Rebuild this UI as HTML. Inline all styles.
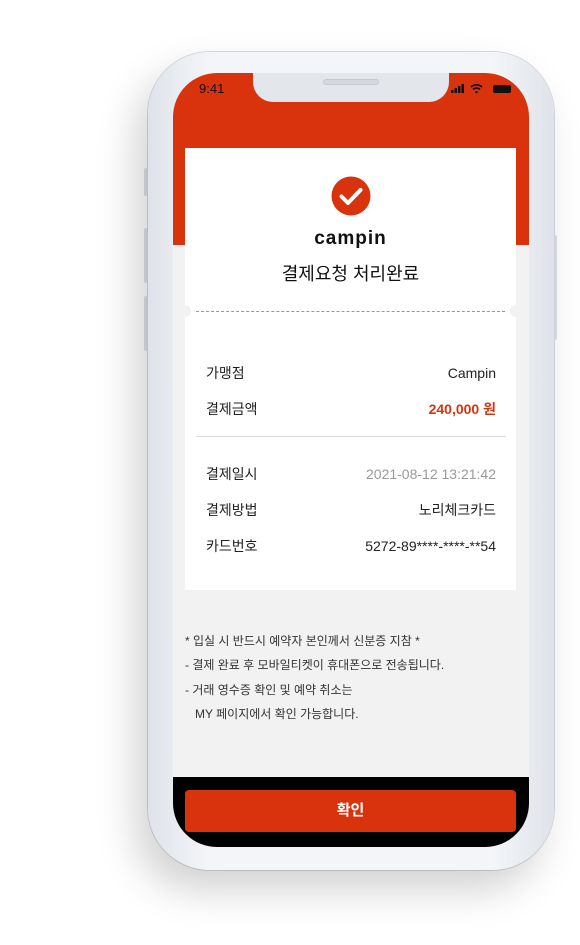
<!DOCTYPE html>
<html><head><meta charset="utf-8"><style>
*{margin:0;padding:0;box-sizing:border-box}
body{width:580px;height:945px;background:#fff;position:relative;overflow:hidden;font-family:"Liberation Sans","Noto Sans CJK KR",sans-serif}
.phone{position:absolute;left:148px;top:52px;width:406px;height:818px;border-radius:62px;background:linear-gradient(90deg,#dfe3e9,#f3f5f8 15%,#f3f5f8 85%,#dfe3e9);box-shadow:-12px 20px 40px rgba(0,0,0,.18),0 0 0 1px #d8dce2}
.btn{position:absolute;background:#dde1e7;border-radius:2px}
.screen{position:absolute;left:173px;top:73px;width:356px;height:774px;border-radius:44px;overflow:hidden;background:#f2f2f2}
.red{position:absolute;left:0;top:0;width:356px;height:172px;background:#d9330d}
.notch{position:absolute;left:80px;top:-2px;width:196px;height:31px;background:#e3e6eb;border-radius:0 0 20px 20px}
.spk{position:absolute;left:150px;top:6px;width:56px;height:6px;border-radius:3px;background:#d4d8de;border:1px solid #c6cad0}
.card{position:absolute;left:12px;top:75px;width:331px;height:442px;background:#fff}
.hole{position:absolute;width:12px;height:12px;border-radius:50%;background:#f2f2f2;top:232px}
.row{position:absolute;left:21px;right:20px;font-size:14px;color:#222;display:flex;justify-content:space-between;align-items:baseline}
.note{position:absolute;left:12px;font-size:12px;color:#333}
</style></head><body>
<div class="btn" style="left:144px;top:168px;width:4px;height:28px"></div>
<div class="btn" style="left:144px;top:228px;width:4px;height:55px"></div>
<div class="btn" style="left:144px;top:296px;width:4px;height:55px"></div>
<div class="btn" style="left:553px;top:235px;width:4px;height:105px"></div>
<div class="phone"></div>
<div class="screen">
<div class="red"></div>
<div class="notch"></div><div class="spk"></div>
<div style="position:absolute;left:26px;top:8px;font-size:13px;color:#111">9:41</div>
<svg style="position:absolute;left:276px;top:9px" width="70" height="12" viewBox="0 0 70 12"><rect x="2" y="8" width="2.5" height="3" fill="#111"/><rect x="5.5" y="6" width="2.5" height="5" fill="#111"/><rect x="9" y="4" width="2.5" height="7" fill="#111"/><rect x="12.5" y="2" width="2.5" height="9" fill="#111"/><path d="M22 5a8 8 0 0 1 11 0M24 7.5a5 5 0 0 1 7 0" stroke="#111" stroke-width="1.6" fill="none"/><circle cx="27.5" cy="10" r="1.3" fill="#111"/><rect x="44" y="3" width="18" height="8" rx="2" fill="#111"/></svg>
<div class="card">
<svg style="position:absolute;left:146px;top:28px" width="40" height="40" viewBox="0 0 40 40"><circle cx="20" cy="20" r="19.5" fill="#d9330d"/><path d="M10.5 20.5l6.5 6.5 12.5-13" stroke="#fff" stroke-width="4" fill="none" stroke-linecap="round" stroke-linejoin="round"/></svg>
<div style="position:absolute;left:0;right:0;top:80px;text-align:center;font-size:19px;font-weight:bold;letter-spacing:1px;color:#111">campin</div>
<div style="position:absolute;left:0;right:0;top:112px;text-align:center;font-size:18px;color:#111">결제요청 처리완료</div>
<div style="position:absolute;left:11px;right:11px;top:163px;border-top:1px dashed #999"></div>
<div class="row" style="top:215px"><span>가맹점</span><span>Campin</span></div>
<div class="row" style="top:251px"><span>결제금액</span><span style="color:#d9330d;font-weight:bold">240,000 원</span></div>
<div style="position:absolute;left:11px;right:10px;top:288px;border-top:1px solid #ddd"></div>
<div class="row" style="top:316px"><span>결제일시</span><span style="color:#999">2021-08-12 13:21:42</span></div>
<div class="row" style="top:352px"><span>결제방법</span><span>노리체크카드</span></div>
<div class="row" style="top:388px"><span>카드번호</span><span>5272-89****-****-**54</span></div>
</div>
<div class="hole" style="left:6px"></div><div class="hole" style="left:337px"></div>
<div class="note" style="top:559px">* 입실 시 반드시 예약자 본인께서 신분증 지참 *</div>
<div class="note" style="top:583px">- 결제 완료 후 모바일티켓이 휴대폰으로 전송됩니다.</div>
<div class="note" style="top:608px">- 거래 영수증 확인 및 예약 취소는</div>
<div class="note" style="top:632px;left:22px">MY 페이지에서 확인 가능합니다.</div>
<div style="position:absolute;left:0;top:704px;width:356px;height:70px;background:#000"></div>
<div style="position:absolute;left:12px;top:717px;width:331px;height:42px;background:#d9330d;border-radius:4px;color:#fff;font-weight:bold;font-size:15px;text-align:center;line-height:42px">확인</div>
</div>
</body></html>
